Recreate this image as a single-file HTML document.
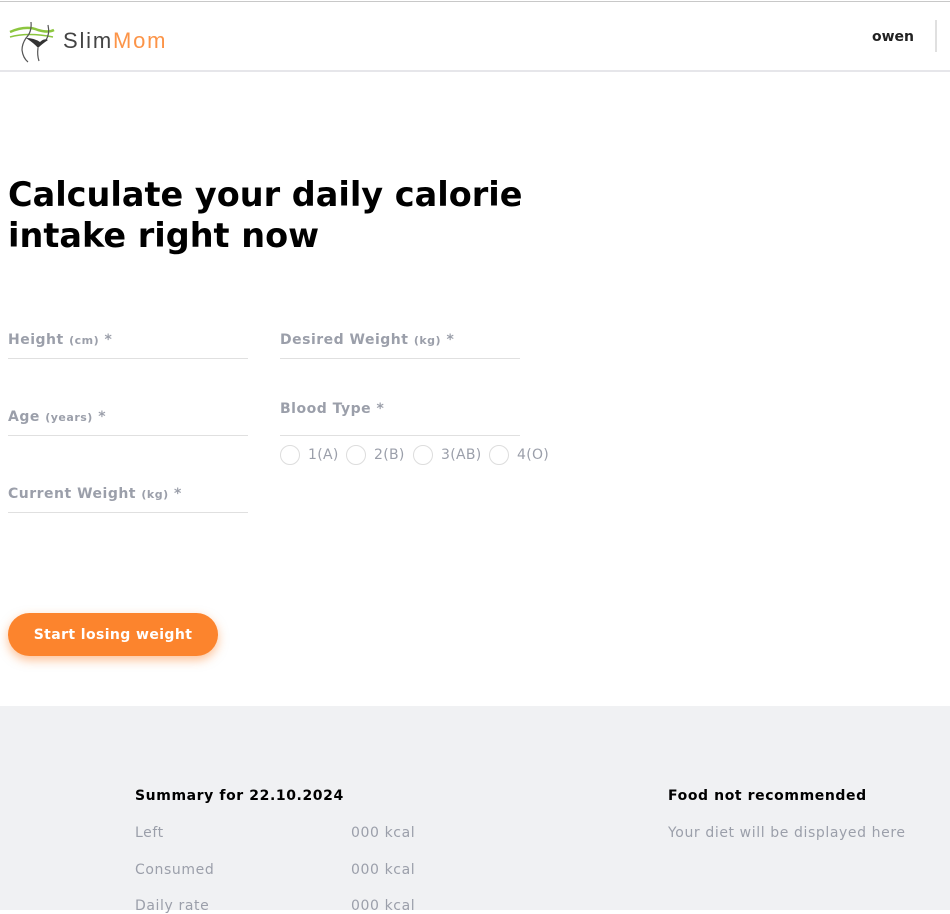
<!DOCTYPE html>
<html><head><meta charset="utf-8"><style>
*{margin:0;padding:0;box-sizing:border-box}
body{width:950px;height:910px;overflow:hidden;background:#fff;font-family:"DejaVu Sans",Verdana,sans-serif;position:relative}
.a{position:absolute;white-space:nowrap}
.lbl{color:#9b9faa;font-weight:bold;font-size:14px;letter-spacing:0.5px}
.lbl small{font-size:11px}
.line{position:absolute;height:1px;background:#e0e0e0;width:240px}
.rad{position:absolute;top:445px;width:20px;height:20px;border:1px solid #ddd;border-radius:50%}
.rt{position:absolute;top:447px;color:#9b9faa;font-size:14px;letter-spacing:0.3px}
.g{color:#9b9faa;font-size:14px;letter-spacing:0.6px}
</style></head><body>
<div style="position:absolute;top:1px;left:0;width:950px;height:1px;background:#c8c8c8"></div>
<div style="position:absolute;top:70px;left:0;width:950px;height:2px;background:#e6e6ea"></div>
<svg class="a" style="left:8px;top:20px" width="50" height="44" viewBox="0 0 50 44">
<path d="M2 12 Q18 5 30 10 Q40 13 46 10" stroke="#8cc63f" stroke-width="2.5" fill="none"/>
<path d="M2 17 Q20 12 45 17" stroke="#8cc63f" stroke-width="1.5" fill="none"/>
<path d="M23 2 Q24 12 18 18 Q14 24 14 30 Q15 38 20 42" stroke="#555" stroke-width="1.2" fill="none"/>
<path d="M40 5 Q42 14 38 20" stroke="#555" stroke-width="1.2" fill="none"/>
<path d="M18 18 Q26 18 32 22 Q36 18 40 20 Q34 24 30 28 Q27 24 18 18Z" fill="#333"/>
<path d="M30 28 Q29 35 31 41" stroke="#555" stroke-width="1.2" fill="none"/>
</svg>
<div class="a" style="left:63px;top:28px;font-size:22px;font-family:'Liberation Sans',sans-serif;letter-spacing:1.8px;color:#444">Slim<span style="color:#fc9448">Mom</span></div>
<div class="a" style="left:872px;top:29px;font-size:14px;font-weight:bold;color:#212121">owen</div>
<div style="position:absolute;left:935px;top:20px;width:2px;height:32px;background:#e0e0e0"></div>

<div class="a" style="left:8px;top:174px;font-size:33.5px;line-height:41px;font-weight:bold;color:#000;white-space:normal;width:560px">Calculate your daily calorie intake right now</div>

<div class="a lbl" style="left:8px;top:332px">Height <small>(cm)</small> *</div>
<div class="line" style="left:8px;top:358px"></div>
<div class="a lbl" style="left:8px;top:409px">Age <small>(years)</small> *</div>
<div class="line" style="left:8px;top:435px"></div>
<div class="a lbl" style="left:8px;top:486px">Current Weight <small>(kg)</small> *</div>
<div class="line" style="left:8px;top:512px"></div>
<div class="a lbl" style="left:280px;top:332px">Desired Weight <small>(kg)</small> *</div>
<div class="line" style="left:280px;top:358px"></div>
<div class="a lbl" style="left:280px;top:401px">Blood Type *</div>
<div class="line" style="left:280px;top:435px"></div>
<div class="rad" style="left:280px"></div><div class="rt" style="left:308px">1(A)</div>
<div class="rad" style="left:346px"></div><div class="rt" style="left:374px">2(B)</div>
<div class="rad" style="left:413px"></div><div class="rt" style="left:441px">3(AB)</div>
<div class="rad" style="left:489px"></div><div class="rt" style="left:517px">4(O)</div>

<div class="a" style="left:8px;top:613px;width:210px;height:43px;border-radius:22px;background:#fc842d;box-shadow:0 4px 10px rgba(252,132,45,0.5);color:#fff;font-weight:bold;font-size:14px;letter-spacing:0.4px;text-align:center;line-height:45px">Start losing weight</div>

<div style="position:absolute;left:0;top:706px;width:950px;height:204px;background:#f0f1f3"></div>
<div class="a" style="left:135px;top:788px;font-size:14px;font-weight:bold;color:#000;letter-spacing:0.6px">Summary for 22.10.2024</div>
<div class="a g" style="left:135px;top:825px">Left</div><div class="a g" style="left:351px;top:825px">000 kcal</div>
<div class="a g" style="left:135px;top:862px">Consumed</div><div class="a g" style="left:351px;top:862px">000 kcal</div>
<div class="a g" style="left:135px;top:898px">Daily rate</div><div class="a g" style="left:351px;top:898px">000 kcal</div>
<div class="a" style="left:668px;top:788px;font-size:14px;font-weight:bold;color:#000;letter-spacing:0.6px">Food not recommended</div>
<div class="a g" style="left:668px;top:825px">Your diet will be displayed here</div>
</body></html>
